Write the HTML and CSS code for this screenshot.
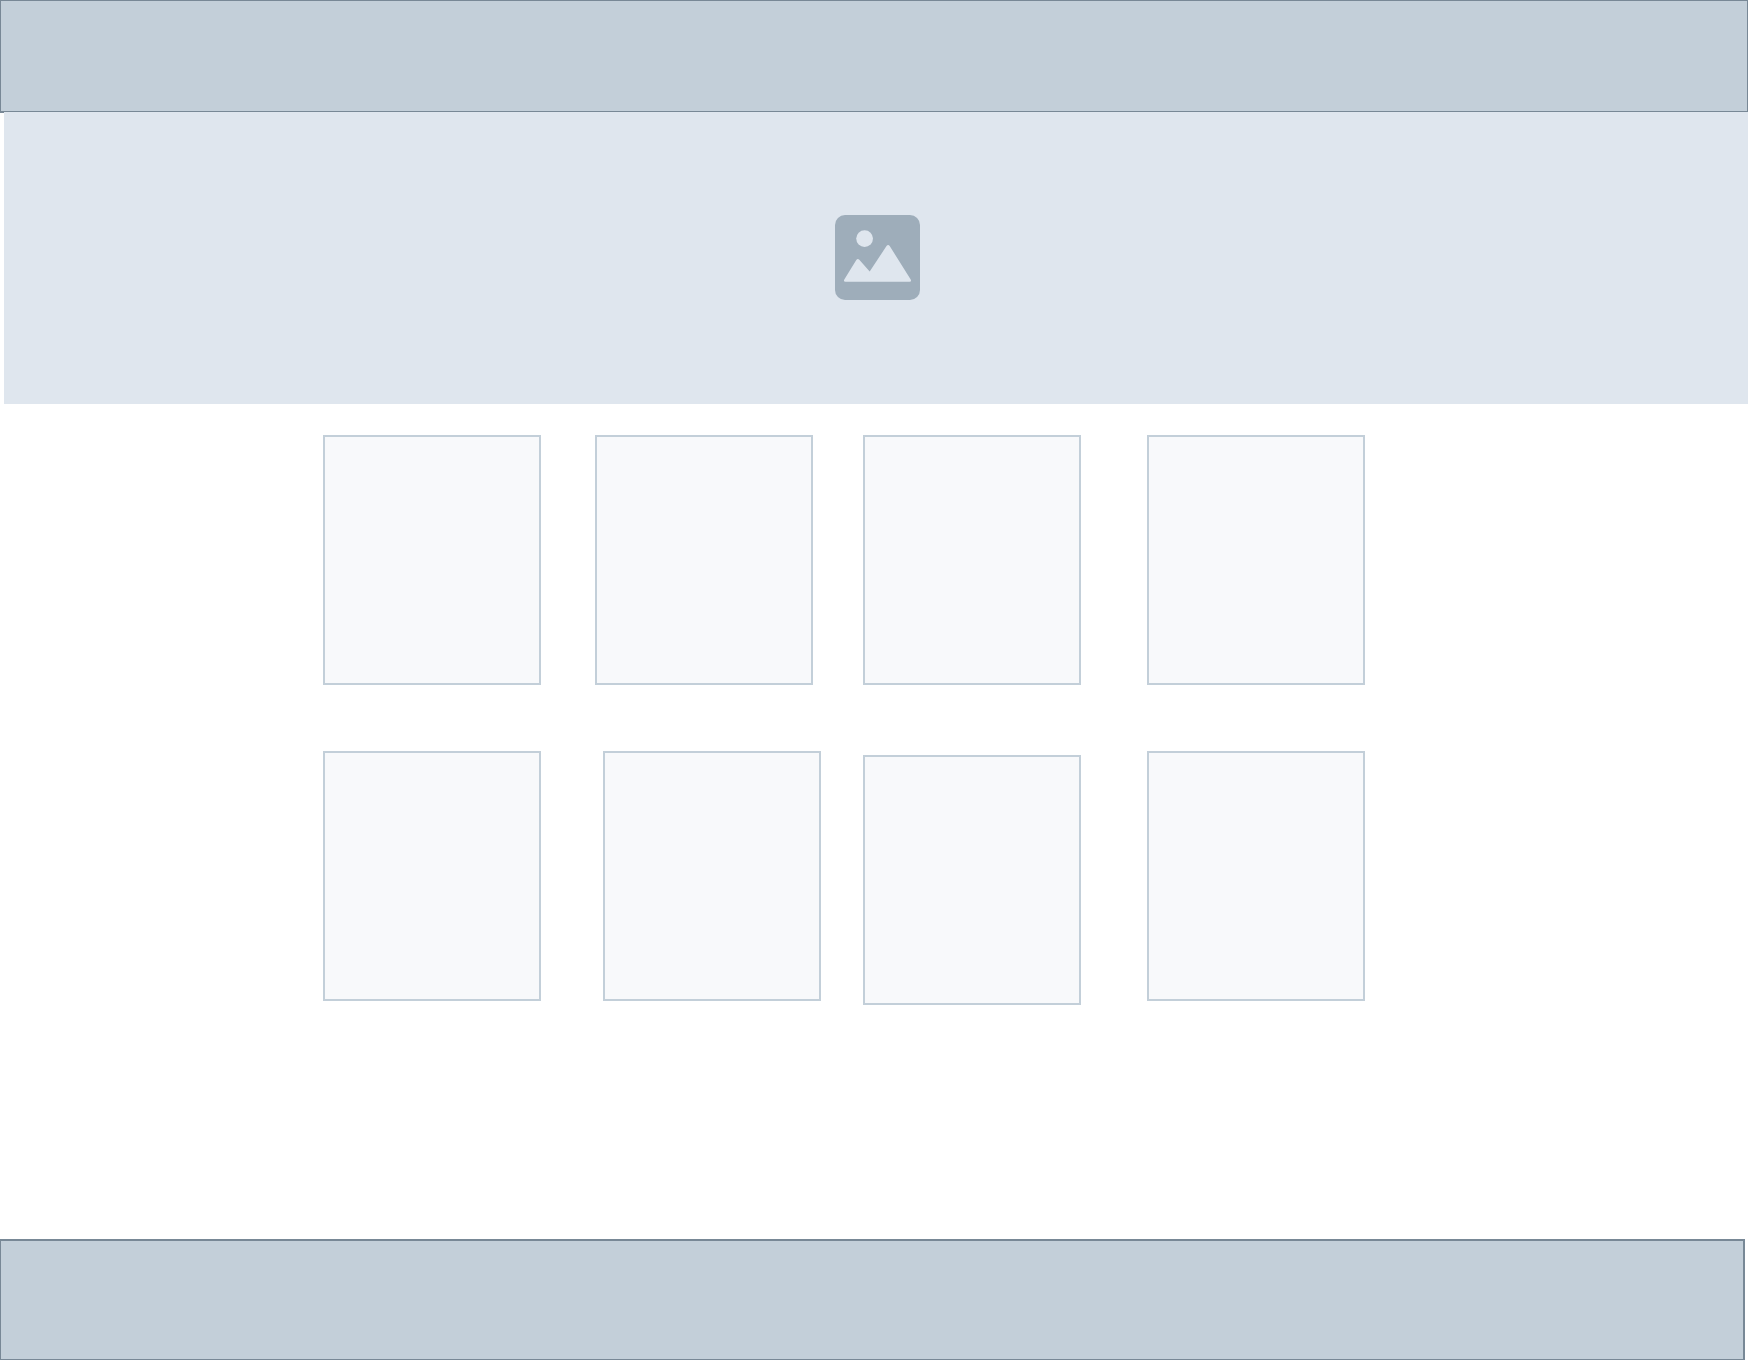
FILE: index.html
```html
<!DOCTYPE html>
<html lang="en">
<head>
<meta charset="utf-8">
<meta name="viewport" content="width=device-width, initial-scale=1">
<title>Wireframe</title>
<link rel="stylesheet" href="styles.css">
</head>
<body>
<header class="site-header"></header>
<main>
  <section class="hero">
    <svg class="hero-icon" viewBox="0 0 85 85" aria-hidden="true">
      <rect width="85" height="85" rx="10" fill="#9eadba"/>
      <circle cx="29.6" cy="23.6" r="8.4" fill="#dfe6ee"/>
      <path fill="#dfe6ee" d="M9.3 64.4 21.3 45Q22.7 42.9 24.3 44.8L34.7 56.6 51.5 31Q53.1 28.9 54.7 31L75.7 64.6Q76.7 66.7 74.7 66.7H10.4Q8.3 66.7 9.3 64.4Z"/>
    </svg>
  </section>
  <section class="gallery">
    <div class="row row-upper">
      <article class="card"></article>
      <article class="card"></article>
      <article class="card"></article>
      <article class="card"></article>
    </div>
    <div class="row row-lower">
      <article class="card"></article>
      <article class="card"></article>
      <article class="card card-dropped"></article>
      <article class="card"></article>
    </div>
  </section>
</main>
<footer class="site-footer"></footer>
</body>
</html>
```
FILE: styles.css
```css
* {
  box-sizing: border-box;
}

body {
  display: flex;
  flex-direction: column;
  min-height: 100vh;
  margin: 0;
  background: #fff;
  font-family: "Liberation Sans", Arial, sans-serif;
}

.site-header {
  flex: none;
  height: 113px;
  border: 1px solid #788896;
  border-bottom-width: 2px;
  background: #c3cfd9;
}

/* The hero overlaps the lower line of the header border. */
.hero {
  position: relative;
  display: flex;
  justify-content: center;
  margin: -1px 0 0 4px;
  padding: 103px 0 104px 3px;
  background: #dfe6ee;
}

.hero-icon {
  display: block;
  width: 85px;
  height: 85px;
}

.gallery {
  display: flex;
  flex-direction: column;
  gap: 62px;
  padding: 31px 60px 62px 0;
}

.row {
  display: grid;
  justify-content: center;
  align-items: start;
}

.row-upper {
  grid-template-columns: 272px 268px 284px 218px;
}

.row-lower {
  grid-template-columns: 280px 260px 284px 218px;
}

.card {
  width: 218px;
  height: 250px;
  border: 2px solid #c3cfd9;
  background: #f8f9fb;
}

.card-dropped {
  margin-top: 4px;
}

.row-upper {
  padding-bottom: 4px;
}

.site-footer {
  flex: none;
  height: 121px;
  margin: auto 3px 0 0;
  border: 1px solid #788896;
  border-top-width: 2px;
  border-right-width: 2px;
  background: #c3cfd9;
}
```
